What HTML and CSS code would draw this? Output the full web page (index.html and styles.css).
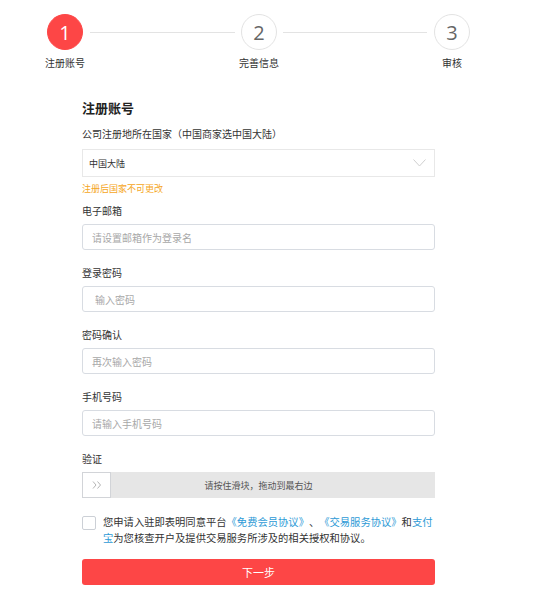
FILE: index.html
```
<!DOCTYPE html>
<html lang="zh-CN">
<head>
  <meta charset="UTF-8" />
  <meta name="viewport" content="width=device-width, initial-scale=1.0"/>
  <title>注册账号</title>
  <link rel="stylesheet" href="styles.css">
</head>
<body>
  <div class="steps">
    <div class="step active"><div class="circle">1</div><span>注册账号</span></div>
    <div class="line line1"></div>
    <div class="step"><div class="circle">2</div><span>完善信息</span></div>
    <div class="line line2"></div>
    <div class="step"><div class="circle">3</div><span>审核</span></div>
  </div>

  <div class="form">
    <h3>注册账号</h3>

    <label class="lbl first">公司注册地所在国家（中国商家选中国大陆）</label>
    <div class="select">
      <span>中国大陆</span>
      <svg width="13" height="8" viewBox="0 0 13 8"><path d="M0.5 0.5 L6.5 7 L12.5 0.5" fill="none" stroke="#cfcfcf" stroke-width="1"/></svg>
    </div>
    <div class="note">注册后国家不可更改</div>

    <div class="field">
      <label class="lbl">电子邮箱</label>
      <input type="text" placeholder="请设置邮箱作为登录名" />
    </div>
    <div class="field">
      <label class="lbl">登录密码</label>
      <input type="password" class="pw" placeholder="输入密码" />
    </div>
    <div class="field">
      <label class="lbl">密码确认</label>
      <input type="password" placeholder="再次输入密码" />
    </div>
    <div class="field">
      <label class="lbl">手机号码</label>
      <input type="text" placeholder="请输入手机号码" />
    </div>
    <div class="field">
      <label class="lbl">验证</label>
      <div class="slider">
        <div class="handle">
          <svg width="10" height="8" viewBox="0 0 10 8"><path d="M1 0.5 L4 4 L1 7.5 M5.5 0.5 L8.5 4 L5.5 7.5" fill="none" stroke="#b5b5b5" stroke-width="1"/></svg>
        </div>
        <span>请按住滑块，拖动到最右边</span>
      </div>
    </div>

    <div class="agree">
      <div class="check"></div>
      <p>您申请入驻即表明同意平台<a href="#">《免费会员协议》</a>、<a href="#">《交易服务协议》</a>和<a href="#">支付宝</a>为您核查开户及提供交易服务所涉及的相关授权和协议。</p>
    </div>

    <button>下一步</button>
  </div>
</body>
</html>
```

FILE: styles.css
```
body {
  margin: 0;
  background: #fff;
  font-family: "Noto Sans CJK SC", "Noto Sans", sans-serif;
  color: #333;
}
.steps {
  display: flex;
  align-items: flex-start;
  padding: 14px 0 0 35px;
}
.step {
  width: 60px;
  display: flex;
  flex-direction: column;
  align-items: center;
}
.step span {
  margin-top: 7px;
  font-size: 10px;
  line-height: 12px;
  color: #333;
  white-space: nowrap;
}
.circle {
  width: 34px;
  height: 34px;
  border: 1px solid #e3e3e3;
  border-radius: 50%;
  display: flex;
  align-items: center;
  justify-content: center;
  font-family: "Open Sans", sans-serif;
  font-size: 20px;
  color: #666;
  background: #fff;
}
.step.active .circle {
  background: #fd4646;
  border-color: #fd4646;
  color: #fff;
}
.line {
  height: 1px;
  background: #e3e3e3;
  margin-top: 18px;
}
.line1 {
  width: 145px;
  margin-left: -5px;
  margin-right: -6px;
}
.line2 {
  width: 144px;
  margin-left: -6px;
  margin-right: -5px;
}
.form {
  width: 353px;
  margin: 30px 0 0 82px;
}
.form h3 {
  margin: 0 0 9px;
  font-size: 13px;
  line-height: 18px;
  font-weight: bold;
  color: #222;
}
.lbl {
  display: block;
  font-size: 10px;
  line-height: 16px;
  color: #333;
  margin-bottom: 5px;
}
.lbl.first {
  margin-bottom: 7px;
}
.select {
  height: 26px;
  border: 1px solid #e8e8e8;
  display: flex;
  align-items: center;
  justify-content: space-between;
  padding: 0 8px 0 6px;
  font-size: 9px;
  color: #333;
}
.note {
  margin: 6px 0 8px;
  font-size: 9px;
  line-height: 12px;
  color: #f5a623;
}
.field {
  margin-bottom: 15px;
}
.field input {
  display: block;
  box-sizing: border-box;
  width: 100%;
  height: 26px;
  border: 1px solid #d8dce2;
  border-radius: 3px;
  padding: 0 9px;
  font-family: inherit;
  font-size: 10px;
  outline: none;
}
.field input.pw {
  padding-left: 12px;
}
.field input::placeholder {
  color: #a8a8a8;
}
.slider {
  position: relative;
  height: 26px;
  background: #e6e6e6;
  display: flex;
  align-items: center;
  justify-content: center;
  font-size: 9px;
  color: #555;
}
.handle {
  position: absolute;
  left: 0;
  top: 0;
  box-sizing: border-box;
  width: 29px;
  height: 26px;
  background: #fff;
  border: 1px solid #d2d4d8;
  display: flex;
  align-items: center;
  justify-content: center;
}
.agree {
  display: flex;
  align-items: flex-start;
  margin-top: 16px;
}
.check {
  flex: none;
  box-sizing: border-box;
  width: 14px;
  height: 14px;
  border: 1px solid #ccd0d6;
  border-radius: 2px;
  margin: 2px 7px 0 0;
}
.agree p {
  margin: 0;
  font-size: 10.3px;
  line-height: 16px;
  text-spacing-trim: space-all;
  color: #333;
}
.agree a {
  color: #2d9ad6;
  text-decoration: none;
}
button {
  display: block;
  width: 100%;
  height: 26px;
  margin-top: 13px;
  border: none;
  border-radius: 3px;
  background: #fd4646;
  color: #fff;
  font-family: inherit;
  font-size: 11px;
}
```
